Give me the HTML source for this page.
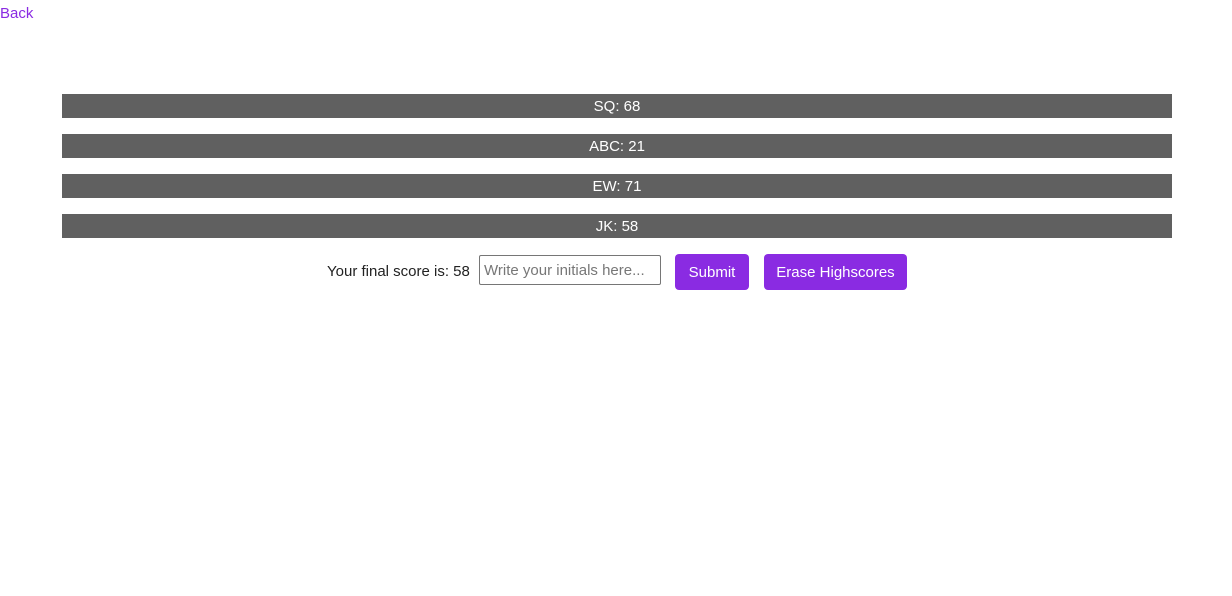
<!DOCTYPE html>
<html><head><style>
body{margin:0;font-family:"Liberation Sans",sans-serif;font-size:15px;background:#fff;width:1232px;height:596px;overflow:hidden;position:relative}
a{position:absolute;left:0;top:5px;color:#8a2be2;text-decoration:none;font-size:15px}
.bar{position:absolute;left:62px;width:1110px;height:24px;background:#606060;color:#fff;text-align:center;line-height:26px;font-size:15px}
.lbl{position:absolute;left:327px;top:263px;color:#222}
.inp{position:absolute;left:479px;top:255px;width:182px;height:30px;border:1px solid #767676;box-sizing:border-box;color:#777;line-height:29px;padding-left:4px;font-size:15px;border-radius:2px}
.btn{position:absolute;top:254px;height:36px;background:#8a2be2;color:#fff;border-radius:4px;line-height:38px;text-align:center;font-size:15px}
</style></head><body>
<a>Back</a>
<div class="bar" style="top:94px">SQ: 68</div>
<div class="bar" style="top:134px">ABC: 21</div>
<div class="bar" style="top:174px">EW: 71</div>
<div class="bar" style="top:214px">JK: 58</div>
<div class="lbl">Your final score is: 58</div>
<div class="inp">Write your initials here...</div>
<div class="btn" style="left:675px;width:74px">Submit</div>
<div class="btn" style="left:764px;width:143px">Erase Highscores</div>
</body></html>
